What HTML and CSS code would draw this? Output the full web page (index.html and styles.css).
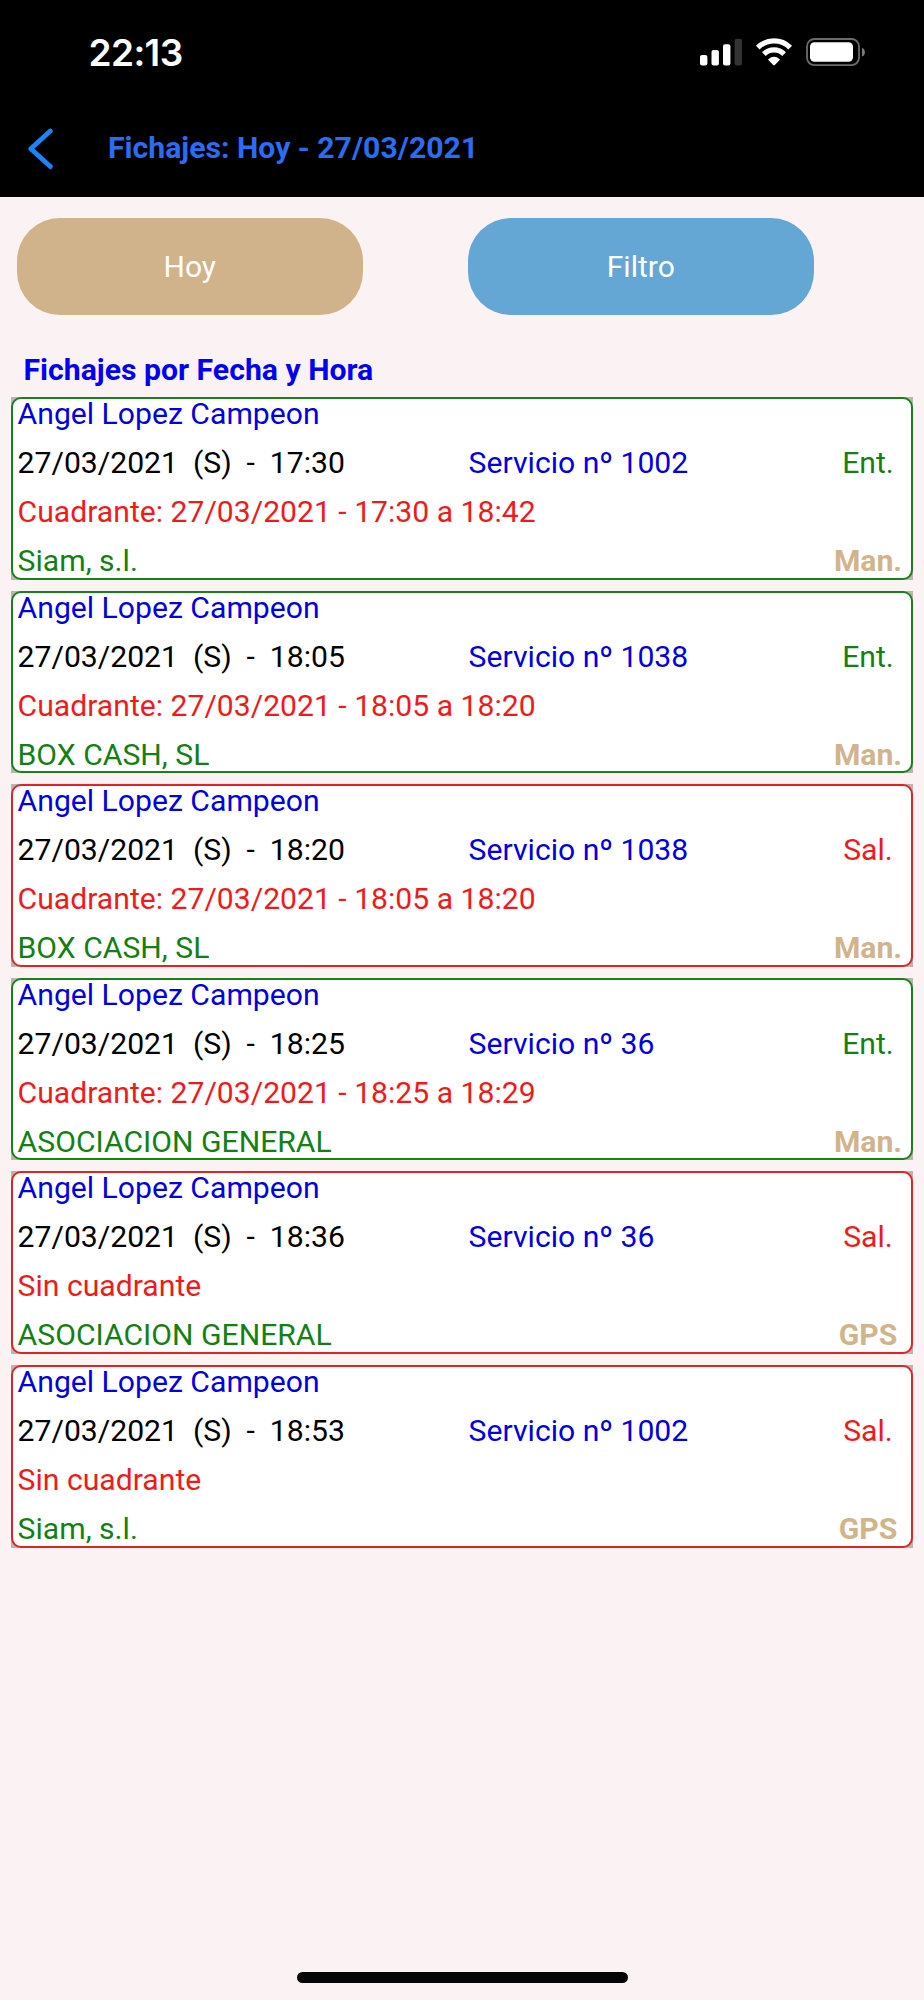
FILE: index.html
```html
<!DOCTYPE html>
<html lang="es">
<head>
    <meta charset="UTF-8">
    <meta name="viewport" content="width=device-width, initial-scale=1.0">
    <title>Fichajes</title>
    <link rel="stylesheet" href="styles.css">
</head>
<body>
    <header class="top">
        <div class="status-bar">
            <span class="clock">22:13</span>
            <svg class="status-icons" width="166" height="30" viewBox="0 0 166 30">
                <!-- cobertura -->
                <g fill="#fff">
                    <rect x="0" y="18" width="7.4" height="10.6" rx="2"/>
                    <rect x="11.5" y="13" width="7.4" height="15.6" rx="2"/>
                    <rect x="23" y="7.3" width="7.4" height="21.3" rx="2"/>
                    <rect x="34.6" y="1.7" width="7.4" height="26.9" rx="2" fill="#333"/>
                </g>
                <!-- wifi -->
                <g fill="none" stroke="#fff" stroke-width="5.2">
                    <path d="M57.8 10.6a23 23 0 0 1 32.4 0"/>
                    <path d="M63.9 17.1a14.4 14.4 0 0 1 20.2 0"/>
                </g>
                <path fill="#fff" d="M68.3 22.2q5.7-4.8 11.4 0q.4.5 0 .9l-4.9 4.9q-.8.7-1.6 0l-4.9-4.9q-.4-.4 0-.9z"/>
                <!-- bateria -->
                <rect x="107" y="2" width="52" height="26.2" rx="7.5" fill="none" stroke="#6b6b6b" stroke-width="1.8"/>
                <rect x="110" y="5.2" width="43" height="19.6" rx="4.5" fill="#fff"/>
                <path fill="#7a7a7a" d="M162 10.8q2.9 1.2 2.9 4.4t-2.9 4.4z"/>
            </svg>
        </div>
        <div class="nav-bar">
            <svg class="back" width="26" height="42" viewBox="0 0 26 42" fill="none" stroke="#1a84fb" stroke-width="4.8" stroke-linecap="round" stroke-linejoin="round">
                <path d="M22.3 3L2.8 20.7L22.3 38.6"/>
            </svg>
            <h1>Fichajes: Hoy - 27/03/2021</h1>
        </div>
    </header>

    <main>
        <div class="buttons">
            <button class="btn btn-hoy">Hoy</button>
            <button class="btn btn-filtro">Filtro</button>
        </div>

        <h2>Fichajes por Fecha y Hora</h2>

        <div class="lista">
            <div class="marco">
                <div class="fichaje entrada">
                    <span class="nombre">Angel Lopez Campeon</span>
                    <span class="fecha">27/03/2021  (S)  -  17:30</span>
                    <span class="servicio">Servicio nº 1002</span>
                    <span class="tipo">Ent.</span>
                    <span class="cuadrante">Cuadrante: 27/03/2021 - 17:30 a 18:42</span>
                    <span class="cliente">Siam, s.l.</span>
                    <span class="modo">Man.</span>
                </div>
            </div>
            <div class="marco">
                <div class="fichaje entrada">
                    <span class="nombre">Angel Lopez Campeon</span>
                    <span class="fecha">27/03/2021  (S)  -  18:05</span>
                    <span class="servicio">Servicio nº 1038</span>
                    <span class="tipo">Ent.</span>
                    <span class="cuadrante">Cuadrante: 27/03/2021 - 18:05 a 18:20</span>
                    <span class="cliente">BOX CASH, SL</span>
                    <span class="modo">Man.</span>
                </div>
            </div>
            <div class="marco">
                <div class="fichaje salida">
                    <span class="nombre">Angel Lopez Campeon</span>
                    <span class="fecha">27/03/2021  (S)  -  18:20</span>
                    <span class="servicio">Servicio nº 1038</span>
                    <span class="tipo">Sal.</span>
                    <span class="cuadrante">Cuadrante: 27/03/2021 - 18:05 a 18:20</span>
                    <span class="cliente">BOX CASH, SL</span>
                    <span class="modo">Man.</span>
                </div>
            </div>
            <div class="marco">
                <div class="fichaje entrada">
                    <span class="nombre">Angel Lopez Campeon</span>
                    <span class="fecha">27/03/2021  (S)  -  18:25</span>
                    <span class="servicio">Servicio nº 36</span>
                    <span class="tipo">Ent.</span>
                    <span class="cuadrante">Cuadrante: 27/03/2021 - 18:25 a 18:29</span>
                    <span class="cliente">ASOCIACION GENERAL</span>
                    <span class="modo">Man.</span>
                </div>
            </div>
            <div class="marco">
                <div class="fichaje salida">
                    <span class="nombre">Angel Lopez Campeon</span>
                    <span class="fecha">27/03/2021  (S)  -  18:36</span>
                    <span class="servicio">Servicio nº 36</span>
                    <span class="tipo">Sal.</span>
                    <span class="cuadrante">Sin cuadrante</span>
                    <span class="cliente">ASOCIACION GENERAL</span>
                    <span class="modo">GPS</span>
                </div>
            </div>
            <div class="marco">
                <div class="fichaje salida">
                    <span class="nombre">Angel Lopez Campeon</span>
                    <span class="fecha">27/03/2021  (S)  -  18:53</span>
                    <span class="servicio">Servicio nº 1002</span>
                    <span class="tipo">Sal.</span>
                    <span class="cuadrante">Sin cuadrante</span>
                    <span class="cliente">Siam, s.l.</span>
                    <span class="modo">GPS</span>
                </div>
            </div>
        </div>
    </main>

    <div class="home-indicator"></div>
</body>
</html>
```
FILE: styles.css
```css
* {
    box-sizing: border-box;
}
body {
    margin: 0;
    height: 2000px;
    display: flex;
    flex-direction: column;
    font-family: Roboto, sans-serif;
    font-size: 30.15px;
    background-color: #fbf2f3;
}
.top {
    height: 197px;
    background-color: #000;
}
.status-bar {
    display: flex;
    justify-content: space-between;
    height: 105px;
    padding: 37px 58px 0 88.5px;
}
.clock {
    color: #fff;
    font-family: Inter, sans-serif;
    font-size: 37px;
    font-weight: 600;
    line-height: 31px;
    letter-spacing: -0.6px;
}
.nav-bar {
    display: flex;
    align-items: center;
    height: 86px;
    padding-left: 28px;
}
.back {
    margin-top: 2px;
}
h1 {
    margin: 0 0 0 54px;
    color: #2b6cf2;
    font-size: 30.2px;
    font-weight: bold;
    line-height: 36px;
}
main {
    flex: 1;
}
.buttons {
    display: flex;
    gap: 105.5px;
    padding: 21px 17px 0;
}
.btn {
    width: 345.5px;
    height: 97px;
    padding: 0;
    border: none;
    border-radius: 43px;
    color: #fff;
    font-family: inherit;
    font-size: 30px;
}
.btn-hoy {
    background-color: #d0b38b;
}
.btn-filtro {
    background-color: #64a6d4;
}
h2 {
    margin: 34px 0 0 23.5px;
    color: #0000f0;
    font-size: 30.2px;
    font-weight: bold;
    line-height: 42px;
}
.lista {
    display: flex;
    flex-direction: column;
    gap: 10.9px;
    padding: 6px 11px 0;
}
/* esquinas grises detras de cada ficha */
.marco {
    background-color: #bbb5b2;
}
.fichaje {
    display: grid;
    grid-template-columns: 451px 1fr 86px;
    grid-auto-rows: 30px;
    row-gap: 19px;
    height: 182.7px;
    padding-left: 4.6px;
    border: 2px solid #1b801b;
    border-radius: 10px;
    background-color: #fff;
    line-height: 30px;
    white-space: pre;
}
.salida {
    border-color: #e02424;
}
.nombre,
.cuadrante {
    grid-column: 1 / 4;
}
.cliente {
    grid-column: 1 / 3;
}
.nombre,
.servicio {
    color: #0000dc;
}
.cuadrante {
    color: #ee1b1b;
}
.cliente {
    color: #148014;
}
.tipo,
.modo {
    text-align: center;
}
.entrada .tipo {
    color: #148014;
}
.salida .tipo {
    color: #ee1b1b;
}
.modo {
    color: #d2b48c;
    font-weight: bold;
}
.home-indicator {
    width: 331px;
    height: 11px;
    margin: 0 auto 17px;
    border-radius: 6px;
    background-color: #050505;
}
```
